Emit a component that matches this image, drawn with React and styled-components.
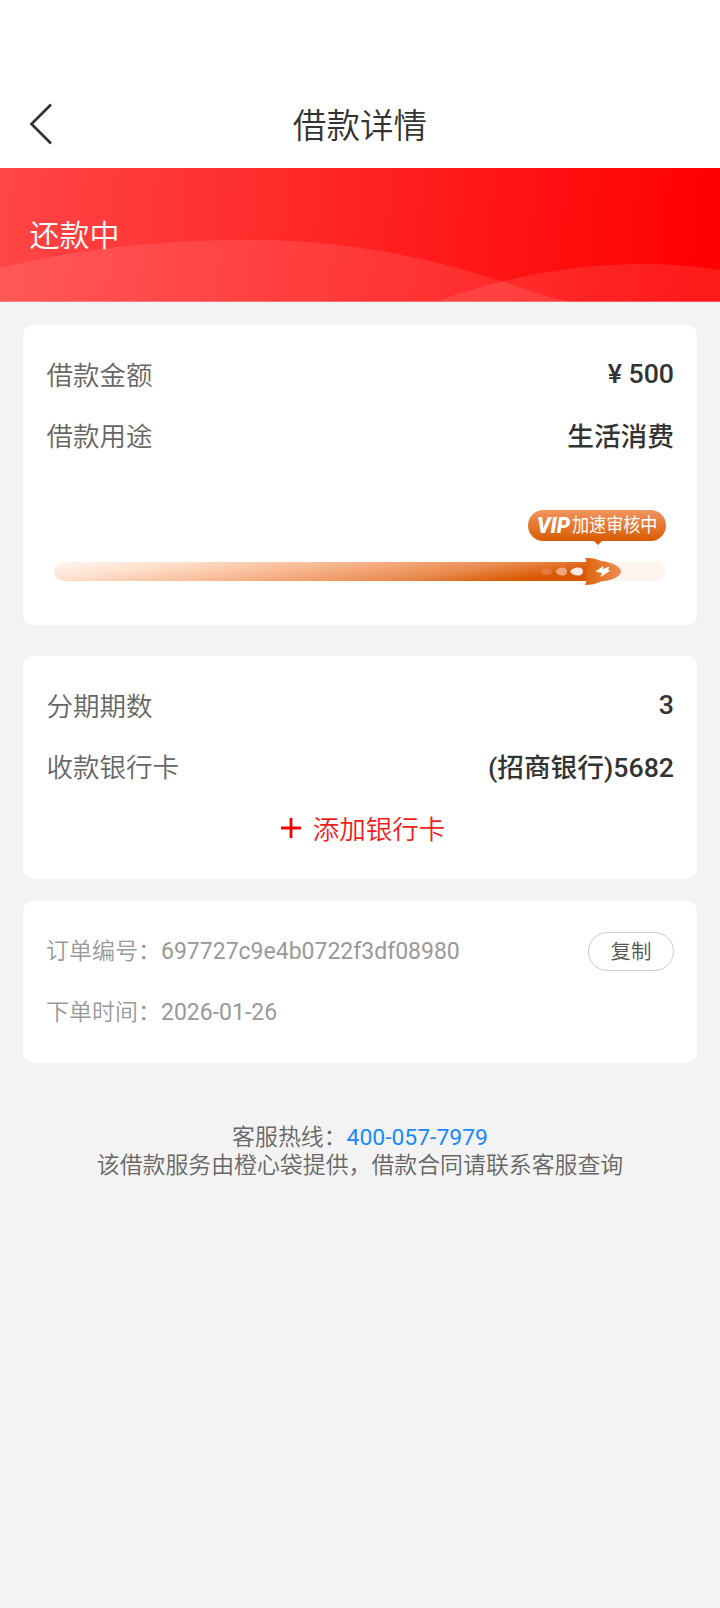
import React from 'react';
import styled, { createGlobalStyle } from 'styled-components';

const GlobalStyle = createGlobalStyle`
  * {
    box-sizing: border-box;
  }

  body {
    margin: 0;
    background-color: #f3f3f3;
    font-family: Roboto, 'Noto Sans CJK SC', sans-serif;
    color: #333;
  }
`;

const Page = styled.div`
  display: flex;
  flex-direction: column;
  width: 720px;
  min-height: 1608px;
  background-color: #f3f3f3;
`;

const Header = styled.header`
  display: grid;
  grid-template-columns: 90px 1fr 90px;
  align-items: center;
  height: 168px;
  padding-top: 80px;
  background-color: #fff;
`;

const BackButton = styled.button`
  display: flex;
  padding: 0 0 0 29px;
  border: none;
  background: none;
`;

const Title = styled.h1`
  margin: 5px 0 0;
  font-size: 33.6px;
  font-weight: 350;
  line-height: 40px;
  text-align: center;
`;

const Banner = styled.section`
  display: grid;
  height: 134px;
  overflow: hidden;

  > * {
    grid-area: 1 / 1;
  }
`;

const BannerText = styled.div`
  padding: 48px 0 0 29.5px;
  font-size: 30px;
  font-weight: 350;
  line-height: 40px;
  color: #fff;
`;

const Card = styled.section`
  height: ${({ $height }) => $height}px;
  margin: ${({ $gap }) => $gap}px 23px 0;
  padding: ${({ $top }) => $top}px 23px 0;
  border-radius: 10px;
  background-color: #fff;
`;

const Row = styled.div`
  display: flex;
  align-items: center;
  justify-content: space-between;
  height: 61.5px;
`;

const Label = styled.span`
  padding: 0 0 3px 0.5px;
  font-size: 26.5px;
  font-weight: 350;
  color: #666;
`;

const Value = styled.span`
  padding-bottom: ${({ $latin }) => ($latin ? 1 : 3)}px;
  font-size: 26.7px;
  font-weight: 500;
  color: #333;
`;

const Progress = styled.div`
  display: flex;
  flex-direction: column;
  padding: 42.5px 8px 0;
`;

const Bubble = styled.div`
  position: relative;
  display: flex;
  align-items: center;
  align-self: flex-end;
  width: 138px;
  height: 31px;
  padding-left: 7px;
  border-radius: 16px;
  background: linear-gradient(to bottom, #f09560, #d85b00);
  color: #fff;

  &::after {
    content: '';
    position: absolute;
    left: 65px;
    top: 30px;
    border: 5px solid transparent;
    border-top: 5px solid #d85b00;
    border-bottom: none;
  }
`;

const Vip = styled.svg`
  flex: none;
`;

const BubbleText = styled.span`
  font-size: 17.1px;
  font-weight: 400;
  line-height: 30px;
  white-space: nowrap;
  transform: scaleY(1.1);
`;

const Track = styled.svg`
  display: block;
  margin-top: 15px;
`;

const AddCard = styled.button`
  display: flex;
  align-items: center;
  justify-content: center;
  gap: 12px;
  width: 100%;
  height: 61px;
  padding: 0 0 3px 6px;
  border: none;
  background: none;
  font-family: inherit;
  font-size: 26.5px;
  font-weight: 350;
  color: #f01c1c;

  svg {
    margin-top: 2px;
  }
`;

const OrderText = styled.span`
  padding-bottom: 4px;
  font-size: 23px;
  font-weight: ${({ $light }) => ($light ? 350 : 400)};
  color: #999;
`;

const CopyButton = styled.button`
  width: 86px;
  height: 39px;
  margin-top: 2px;
  padding: 0 0 4px;
  border: 1px solid #ccc;
  border-radius: 20px;
  background-color: #fff;
  font-family: inherit;
  font-size: 20.5px;
  font-weight: 350;
  color: #555;
`;

const Footer = styled.footer`
  margin-top: 61px;
  font-size: 22.9px;
  font-weight: 350;
  line-height: 27.5px;
  text-align: center;
  color: #666;
`;

const Phone = styled.a`
  font-weight: 400;
  color: #1989fa;
`;

const BannerArt = () => (
  <svg width="720" height="134" viewBox="0 0 720 134">
    <defs>
      <linearGradient id="banner" gradientUnits="userSpaceOnUse" x1="0" y1="0" x2="710" y2="70">
        <stop offset="0" stopColor="#ff4646" />
        <stop offset="1" stopColor="#ff0000" />
      </linearGradient>
    </defs>
    <rect width="720" height="134" fill="url(#banner)" />
    <path
      d="M0 100C75 82 150 72 250 72C350 72 430 90 508 115C530 123 550 130 570 134H0Z"
      fill="#fff"
      fillOpacity="0.1"
    />
    <path
      d="M435 134C500 110 570 96 645 96C675 96 700 99 720 102V134Z"
      fill="#fff"
      fillOpacity="0.1"
    />
    <rect y="133" width="720" height="1" fill="#fff" fillOpacity="0.25" />
  </svg>
);

const RocketTrack = () => (
  <Track width="612" height="30" viewBox="0 0 612 30">
    <defs>
      <linearGradient id="trail" gradientUnits="userSpaceOnUse" x1="0" y1="6" x2="13.5" y2="100">
        <stop offset="0" stopColor="#fff6f0" />
        <stop offset="0.18" stopColor="#fee2d0" />
        <stop offset="0.34" stopColor="#fbc8a8" />
        <stop offset="0.52" stopColor="#f4a97c" />
        <stop offset="0.7" stopColor="#e98a4e" />
        <stop offset="0.88" stopColor="#d95800" />
        <stop offset="1" stopColor="#d85600" />
      </linearGradient>
      <linearGradient id="rocket" x1="0" y1="0" x2="1" y2="0">
        <stop offset="0" stopColor="#de640f" />
        <stop offset="1" stopColor="#ee8d52" />
      </linearGradient>
    </defs>
    <rect y="6" width="612" height="19" rx="9.5" fill="#fff5ee" />
    <path d="M9.5 6H540V25H9.5A9.5 9.5 0 0 1 9.5 6Z" fill="url(#trail)" />
    <path
      d="M487 15.5C488 12.5 491 12 493.5 12C496.500 12 498 13.500 498 15.500C498 17.500 496.500 19 493.500 19C491 19 488 18.500 487 15.500Z"
      fill="#e67a3e"
    />
    <path
      d="M501.500 15.500C503 12.500 506 11.500 508.500 11.500C511.500 11.500 513 13.500 513 15.500C513 17.500 511.500 19.500 508.500 19.500C506 19.500 503 18.500 501.500 15.500Z"
      fill="#f2a583"
    />
    <path
      d="M516 15.500C518 12.500 521 11.500 524 11.500C527.500 11.500 529 13.500 529 15.500C529 17.500 527.500 19.500 524 19.500C521 19.500 518 18.500 516 15.500Z"
      fill="#fdeae0"
    />
    <path
      d="M531 2C537 2 542 2.500 547 5C558 6 567 11 567 15.500C567 20 558 25 547 25.500C542 28 537 29 531 29C532 27 533 25 532.500 23.500Q530 15.500 532.500 7.500C533 6 532 4 531 2Z"
      fill="url(#rocket)"
    />
    <path
      d="M542 15.500L549 10.500L548.500 13.500L555 11L553.500 14.500L556 14.500L547 20.500L548 16.500Z"
      fill="#fff"
      stroke="#fff"
      strokeWidth="0.6"
      strokeLinejoin="round"
    />
  </Track>
);

const DetailRow = ({ label, value, latin }) => (
  <Row>
    <Label>{label}</Label>
    <Value $latin={latin}>{value}</Value>
  </Row>
);

const App = () => {
  return (
    <>
      <GlobalStyle />
      <Page>
        <Header>
          <BackButton aria-label="返回">
            <svg width="24" height="42" viewBox="0 0 24 42" fill="none">
              <path d="M22 1.500L2.500 21L22 40.500" stroke="#333" strokeWidth="2.700" />
            </svg>
          </BackButton>
          <Title>借款详情</Title>
        </Header>

        <Banner>
          <BannerArt />
          <BannerText>还款中</BannerText>
        </Banner>

        <Card $height={300} $gap={23} $top={19}>
          <DetailRow label="借款金额" value="¥ 500" latin />
          <DetailRow label="借款用途" value="生活消费" />
          <Progress>
            <Bubble>
              <Vip width="37" height="24" viewBox="0 0 37 24">
                <text
                  x="2"
                  y="20"
                  textLength="33"
                  lengthAdjust="spacingAndGlyphs"
                  fontFamily="Roboto"
                  fontSize="22"
                  fontWeight="900"
                  fontStyle="italic"
                  fill="#fff"
                >
                  VIP
                </text>
              </Vip>
              <BubbleText>加速审核中</BubbleText>
            </Bubble>
            <RocketTrack />
          </Progress>
        </Card>

        <Card $height={223} $gap={31} $top={19}>
          <DetailRow label="分期期数" value="3" latin />
          <DetailRow label="收款银行卡" value="(招商银行)5682" />
          <AddCard>
            <svg width="20" height="20" viewBox="0 0 20 20">
              <path d="M10 0V20M0 10H20" stroke="#f50000" strokeWidth="2.800" />
            </svg>
            添加银行卡
          </AddCard>
        </Card>

        <Card $height={162} $gap={22} $top={19}>
          <Row>
            <OrderText>
              <OrderText $light>订单编号：</OrderText>697727c9e4b0722f3df08980
            </OrderText>
            <CopyButton>复制</CopyButton>
          </Row>
          <Row>
            <OrderText>
              <OrderText $light>下单时间：</OrderText>2026-01-26
            </OrderText>
          </Row>
        </Card>

        <Footer>
          <div>
            客服热线：<Phone>400-057-7979</Phone>
          </div>
          <div>该借款服务由橙心袋提供，借款合同请联系客服查询</div>
        </Footer>
      </Page>
    </>
  );
};

export default App;
